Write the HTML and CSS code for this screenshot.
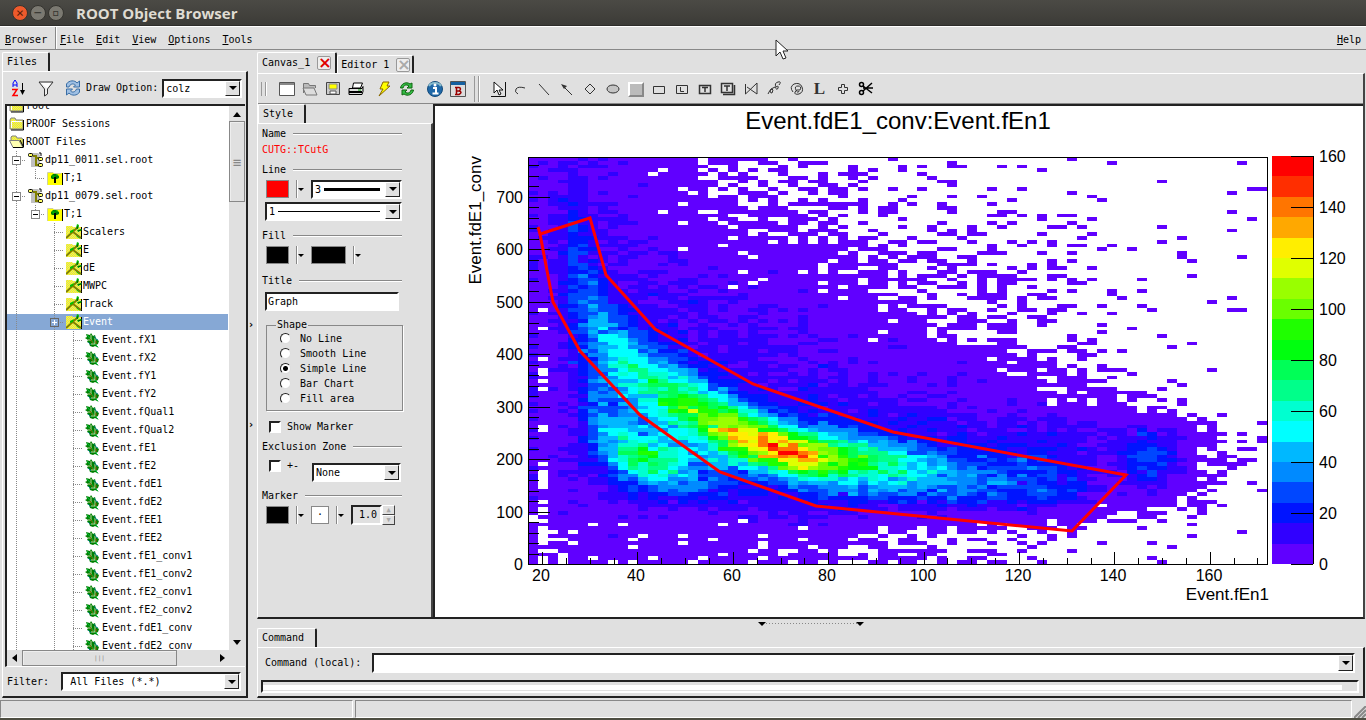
FILE: index.html
```html
<!DOCTYPE html>
<html lang="en">
<head>
  <meta charset="UTF-8">
  <title>ROOT Object Browser</title>
  <link rel="stylesheet" href="styles.css">
</head>
<body>
<svg class="defs" aria-hidden="true">
  <defs>
    <pattern id="dither" width="2" height="2" patternUnits="userSpaceOnUse">
      <rect width="2" height="2" fill="#ffff00"/><rect width="1" height="1" fill="#d8d890"/><rect x="1" y="1" width="1" height="1" fill="#d8d890"/>
    </pattern>
    <symbol id="icon-folder" viewBox="0 0 16 16">
      <path d="M1 4l1-2h4l1 2h7v9H1z" fill="url(#dither)" stroke="#808080"/>
      <path d="M2.500 12V5.500H13" fill="none" stroke="#fff"/>
      <path d="M14.500 4v10H2" fill="none" stroke="#000"/>
    </symbol>
    <symbol id="icon-folder-open" viewBox="0 0 16 16">
      <path d="M2 6V3l1-1h4l1 2h5l1 2v7H4z" fill="url(#dither)" stroke="#808080"/>
      <path d="M0.500 6.500H10l4 7H4z" fill="#ffffb0" stroke="#808080"/>
      <path d="M11 6l3.500 7V5M14.500 13.500H4" fill="none" stroke="#000"/>
    </symbol>
    <symbol id="icon-rootfile" viewBox="0 0 16 16">
      <path d="M3 1h7l2 2v12H3z" fill="#c0c0c0"/>
      <path d="M5 4h3v9h4M8 6h4" fill="none" stroke="#808000" stroke-width="2"/>
      <g fill="#ffff66" stroke="#000"><rect x="0.500" y="1.500" width="4" height="3" rx="1"/><rect x="10.500" y="5.500" width="4" height="3" rx="1"/><rect x="10.500" y="11.500" width="4" height="3" rx="1"/></g>
      <path d="M11 1h2v3" fill="none" stroke="#000"/>
    </symbol>
    <symbol id="icon-tree" viewBox="0 0 16 16">
      <path d="M1 2h5v1h9v12H1z" fill="#ffff00"/><path d="M0.500 15V2.500H6l1 1h7" fill="none" stroke="#d0d0a0"/>
      <path d="M15.500 3v12" stroke="#000"/>
      <path d="M4 8V6l2-2h3l3 2v2l-2 1H5z" fill="#008000"/><path d="M5 6h2v2M9 5h2" fill="none" stroke="#00c000"/>
      <path d="M8 7v6" stroke="#000" stroke-width="2"/>
    </symbol>
    <symbol id="icon-branch" viewBox="0 0 16 16">
      <path d="M0 2h6l1 1h9v12H0z" fill="url(#dither)"/><path d="M15.500 3v12" stroke="#000"/>
      <path d="M0 14L12 3M7 8l8 6" fill="none" stroke="#808000" stroke-width="2"/>
      <path d="M10 4l1-4 2 1-1 4zM11 6l4-1 1 1-4 2zM4 7l4-2-1 3-3 1zM10 11l5 4-4-2z" fill="#00c000"/>
      <path d="M11 5l1-3M12 7l3-1" stroke="#006000"/>
    </symbol>
    <symbol id="icon-leaf" viewBox="0 0 16 16">
      <path d="M1 2l4 1 1-2 2 3 2-1 1 4 3 2-1 3-2 1 3 3-4-2-2 1-3-1-1-3-2-1 1-2-3-2 2-1z" fill="#008000"/>
      <path d="M2 3l8 9 3 3" fill="none" stroke="#00c040"/>
      <path d="M6 3v5H3M10 6v6H6" fill="none" stroke="#c0d8a0" stroke-width="1"/>
      <path d="M9 4l2 3 2 1M3 10l3 3" fill="none" stroke="#008080"/>
      <path d="M5 7l3 4M11 9v3" stroke="#806000"/>
    </symbol>
  </defs>
</svg>

<header class="titlebar">
  <button class="win close" aria-label="Close">×</button>
  <button class="win" aria-label="Minimize">−</button>
  <button class="win" aria-label="Maximize">▫</button>
  <h1>ROOT Object Browser</h1>
</header>

<nav class="menubar">
  <button class="first"><u>B</u>rowser</button>
  <button><u>F</u>ile</button>
  <button><u>E</u>dit</button>
  <button><u>V</u>iew</button>
  <button><u>O</u>ptions</button>
  <button><u>T</u>ools</button>
  <button class="help"><u>H</u>elp</button>
</nav>

<main>
  <aside class="files">
    <div class="tabs"><button class="tab">Files</button></div>
    <div class="panel files-panel">
      <div class="file-tools">
        <button class="tool" aria-label="Sort"><svg width="16" height="18" viewBox="0 0 16 18"><path d="M2 8V4l2-3 2 3v4M2 6h4" fill="none" stroke="#00f"/><path d="M1 10.500h5L2 16.500h5" fill="none" stroke="#f00" stroke-width="1.500"/><path d="M11.500 4v8" stroke="#000"/><path d="M9 11h5l-2.500 5z"/></svg></button>
        <button class="tool" aria-label="Filter"><svg width="16" height="18" viewBox="0 0 16 18"><path d="M1 3h14L9.500 10v5l-3 2v-7z" fill="#eee" stroke="#333"/><path d="M3 4h10l-4 5z" fill="#fff"/></svg></button>
        <button class="tool" aria-label="Refresh"><svg width="16" height="18" viewBox="0 0 16 18"><path d="M1.500 8V5C4 1 10 1 12 4l2.500-2v6h-6l2-2C8 4 5 5 4 8zM14.500 10v3c-2 4-8 4-10.500 1l-2.500 2v-6h6l-2 2c2 2 5 1 6-2z" fill="#9fc0e4" stroke="#3a6ea5"/></svg></button>
        <label for="drawopt">Draw Option:</label>
        <div class="combo drawopt"><select id="drawopt"><option>colz</option></select><span class="arrow"></span></div>
      </div>
      <div class="tree-box">
        <ul class="tree" id="file-tree"></ul>
        <div class="vscroll"><i class="up"></i><div class="thumb">≡</div><i class="down"></i></div>
        <div class="hscroll"><i class="left"></i><div class="thumb">|||</div><i class="right"></i></div>
      </div>
      <div class="filter">
        <label for="filter">Filter:</label>
        <div class="combo"><select id="filter"><option>All Files (*.*)</option></select><span class="arrow"></span></div>
      </div>
    </div>
  </aside>

  <div class="vsplit"><span>›</span><span>›</span></div>

  <section class="work">
    <div class="tabs">
      <button class="tab canvas-tab">Canvas_1 <span class="x red">×</span></button>
      <button class="tab editor-tab">Editor 1 <span class="x">×</span></button>
    </div>
    <div class="panel canvas-panel">
      <div class="toolbar">
        <span class="grip"></span>
        <div class="group">
          <button class="tool" aria-label="New"><svg viewBox="0 0 16 16"><path d="M0.500 1.500h15v13H.500z" fill="#fff" stroke="#555"/><path d="M1 2h14v2H1z" fill="#888"/></svg></button>
          <button class="tool" aria-label="Open"><svg viewBox="0 0 16 16"><path d="M1.500 12V2.500h5l1 2h6V7" fill="#bbb" stroke="#777"/><path d="M1 7h11l3 7H4z" fill="#ddd" stroke="#777"/></svg></button>
          <button class="tool" aria-label="Save"><svg viewBox="0 0 16 16"><path d="M1.500 1.500h13v12h-13z" fill="#ccc" stroke="#444"/><path d="M4 3h8v5H4z" fill="#ff0" stroke="#888"/><path d="M5 10h6v3H5z" fill="#fff" stroke="#555"/></svg></button>
          <button class="tool" aria-label="Print"><svg viewBox="0 0 16 16"><path d="M4.500 7l1-5h9l-2 5z" fill="#fff" stroke="#000"/><path d="M1 7.500h13l1-2v5l-1 3H1z" fill="#ddd" stroke="#000"/><path d="M1 11h13" stroke="#000" stroke-width="2"/><path d="M10 9h3" stroke="#0a0"/></svg></button>
        </div>
        <div class="group">
          <button class="tool" aria-label="Interrupt"><svg viewBox="0 0 16 16"><path d="M7 1h6l-2 4h3L3 15l4-7H4z" fill="#ff0" stroke="#886600"/></svg></button>
          <button class="tool" aria-label="Refresh canvas"><svg viewBox="0 0 16 16"><path d="M1.500 7C2 3 7 0 11 3l2-1v5H8l2-2C7 3 5 4 4 7z" fill="#3b4" stroke="#161"/><path d="M14.500 9c-.5 4-5.500 7-9.500 4l-2 1V9h5l-2 2c3 2 5 1 6-2z" fill="#3b4" stroke="#161"/></svg></button>
        </div>
        <div class="group">
          <button class="tool" aria-label="Inspect"><svg viewBox="0 0 16 16"><circle cx="8" cy="8" r="7.500" fill="#1f68a8" stroke="#134a7a"/><path d="M2 5c2-4 10-4 12 0" stroke="#8bc" fill="none" stroke-width="2"/><path d="M6 7h3v5M5.500 12.500h6" fill="none" stroke="#fff" stroke-width="2"/><circle cx="8" cy="4" r="1.500" fill="#fff"/></svg></button>
          <button class="tool" aria-label="Browser"><svg viewBox="0 0 16 16"><path d="M.500.500h15v15H.500z" fill="#ddd" stroke="#555"/><path d="M1 1h14v3H1z" fill="#1560a0"/><path d="M5 6.500h4q3 1 0 3.500 4 1 0 3.500H5M6.500 6v7M6 10h4" fill="none" stroke="#900" stroke-width="1.500"/></svg></button>
        </div>
        <span class="sep"></span>
        <div class="group draw">
          <button class="tool" aria-label="Modify"><svg viewBox="0 0 16 16"><path d="M1 15.500h14.500V1" fill="none" stroke="#111"/><path d="M4 1v11l3-3 2 5 2-1-2-4h4z" fill="#fff" stroke="#111"/></svg></button>
          <button class="tool" aria-label="Arc"><svg viewBox="0 0 16 16"><path d="M5 13Q1 11 3 8t9-1" fill="none" stroke="#333"/></svg></button>
          <button class="tool" aria-label="Line"><svg viewBox="0 0 16 16"><path d="M3 3l10 11" stroke="#333"/></svg></button>
          <button class="tool" aria-label="Arrow"><svg viewBox="0 0 16 16"><path d="M3 4l10 10" stroke="#333"/><path d="M2 3l6 2-3 3z" fill="#333"/></svg></button>
          <button class="tool" aria-label="Diamond"><svg viewBox="0 0 16 16"><path d="M8 3l5 5-5 5-5-5z" fill="none" stroke="#333"/></svg></button>
          <button class="tool" aria-label="Ellipse"><svg viewBox="0 0 16 16"><ellipse cx="8" cy="8" rx="6" ry="4" fill="#c4c4c4" stroke="#333"/></svg></button>
          <button class="tool" aria-label="Pad"><svg viewBox="0 0 16 16"><path d="M0 1h16v15H0z" fill="#888"/><path d="M0 16V1h16l-2 2H2v11z" fill="#fff"/><path d="M2 3h12v11H2z" fill="#bbb"/></svg></button>
          <button class="tool" aria-label="Pave"><svg viewBox="0 0 16 16"><path d="M2.500 5.500h11v7h-11z" fill="none" stroke="#333"/></svg></button>
          <button class="tool" aria-label="Pave label"><svg viewBox="0 0 16 16"><path d="M2.500 4.500h11v8h-11z" fill="none" stroke="#333"/><path d="M6.500 6v4.500H10" fill="none" stroke="#333"/></svg></button>
          <button class="tool" aria-label="Pave text"><svg viewBox="0 0 16 16"><path d="M2.500 4.500h11v8h-11zM5 6.500h6M8 7v4" fill="none" stroke="#333" stroke-width="1.500"/></svg></button>
          <button class="tool" aria-label="Paves text"><svg viewBox="0 0 16 16"><path d="M1.500 2.500h11v9h-11zM14.500 4v9.500H3M4 5h6M7 5v5" fill="none" stroke="#333" stroke-width="1.500"/></svg></button>
          <button class="tool" aria-label="Polyline"><svg viewBox="0 0 16 16"><path d="M2.500 3v10L14 2v11L4 6" fill="none" stroke="#333"/></svg></button>
          <button class="tool" aria-label="Curly line"><svg viewBox="0 0 16 16"><path d="M2 13q2-5 4-5t0 4q-3 0-1-4l4-2q2 4 3 1t-2-1q-2-4 2-5t1 3" fill="none" stroke="#333"/></svg></button>
          <button class="tool" aria-label="Curly arc"><svg viewBox="0 0 16 16"><path d="M4 11q-4-5 1-8 6-2 8 3t-3 7q-5 1-4-2t5-2q2-4-2-4t-2 4 3 1" fill="none" stroke="#333"/></svg></button>
          <button class="tool letter" aria-label="Latex">L</button>
          <button class="tool" aria-label="Marker"><svg viewBox="0 0 16 16"><path d="M6.500 3.500h3v3h3v3h-3v3h-3v-3h-3v-3h3z" fill="none" stroke="#333"/></svg></button>
          <button class="tool" aria-label="Graphical cut"><svg viewBox="0 0 16 16"><g fill="none" stroke="#000" stroke-width="1.500"><circle cx="3.500" cy="3.500" r="2"/><circle cx="3.500" cy="11.500" r="2"/><path d="M5 5l9 7M5 10l9-8M5 7h10"/></g></svg></button>
        </div>
      </div>
      <div class="editor-row">
        <form class="style">
          <div class="tabs"><button class="tab" type="button">Style</button></div>
          <div class="style-body">
            <h3>Name</h3>
            <p class="objname">CUTG::TCutG</p>
            <h3>Line</h3>
            <div class="row">
              <button type="button" class="swatch red" aria-label="Line color"></button><i class="drop"></i>
              <div class="combo width"><select aria-label="Line width"><option>3</option></select><span class="stroke thick"></span><span class="arrow"></span></div>
            </div>
            <div class="combo dash"><select aria-label="Line style"><option>1</option></select><span class="stroke"></span><span class="arrow"></span></div>
            <h3>Fill</h3>
            <div class="row">
              <button type="button" class="swatch" aria-label="Fill color"></button><i class="drop"></i>
              <button type="button" class="swatch wide" aria-label="Fill pattern"></button><i class="drop"></i>
            </div>
            <h3><label for="title">Title</label></h3>
            <input class="text" id="title" type="text" value="Graph">
            <fieldset>
              <legend>Shape</legend>
              <label><input type="radio" name="shape">No Line</label>
              <label><input type="radio" name="shape">Smooth Line</label>
              <label><input type="radio" name="shape" checked>Simple Line</label>
              <label><input type="radio" name="shape">Bar Chart</label>
              <label><input type="radio" name="shape">Fill area</label>
            </fieldset>
            <label class="check"><input type="checkbox">Show Marker</label>
            <h3>Exclusion Zone</h3>
            <div class="row zone">
              <label class="check"><input type="checkbox">+-</label>
              <div class="combo none"><select aria-label="Exclusion side"><option>None</option></select><span class="arrow"></span></div>
            </div>
            <h3>Marker</h3>
            <div class="row">
              <button type="button" class="swatch" aria-label="Marker color"></button><i class="drop"></i>
              <button type="button" class="swatch dot" aria-label="Marker style">·</button><i class="drop"></i>
              <div class="spin"><input type="text" value="1.0" aria-label="Marker size"><span class="spin-btns"><button type="button" aria-label="More">▲</button><button type="button" aria-label="Less">▼</button></span></div>
            </div>
          </div>
        </form>
        <div class="canvas"><svg id="plot" viewBox="0 0 926 511" role="img" aria-label="Event.fdE1_conv:Event.fEn1"></svg></div>
      </div>
    </div>

    <div class="hsplit"><i></i></div>

    <div class="tabs"><button class="tab">Command</button></div>
    <div class="panel command">
      <div class="cmd-row">
        <label for="cmd">Command (local):</label>
        <div class="combo"><input id="cmd" type="text"><span class="arrow"></span></div>
      </div>
      <div class="output"><div></div></div>
    </div>
  </section>
</main>

<footer class="statusbar"><span></span><span></span><svg width="12" height="12" viewBox="0 0 12 12"><path d="M0 12L12 0M4 12l8-8M8 12l4-4" stroke="#888" stroke-width="2"/></svg></footer>
<div class="desktop"></div>

<svg class="pointer" width="14" height="22" viewBox="0 0 14 22"><path d="M1 1v16l4-4 3 7 3-1-3-7h5z" fill="#fff" stroke="#222"/></svg>

<script>
  // guides: "-" open node, "+" closed node, "T" child, "L" last child, "|" pass-through
  const rows = [
    ["", "folder", "root"],
    ["", "folder", "PROOF Sessions"],
    ["", "folder-open", "ROOT Files"],
    ["-", "rootfile", "dp11_0011.sel.root"],
    ["|L", "tree", "T;1"],
    ["-", "rootfile", "dp11_0079.sel.root"],
    ["|-", "tree", "T;1"],
    ["| T", "branch", "Scalers"],
    ["| T", "branch", "E"],
    ["| T", "branch", "dE"],
    ["| T", "branch", "MWPC"],
    ["| T", "branch", "Track"],
    ["| +", "branch", "Event"]
  ];
  const leaves = ["fX1", "fX2", "fY1", "fY2", "fQual1", "fQual2", "fE1", "fE2", "fdE1", "fdE2", "fEE1", "fEE2",
    "fE1_conv1", "fE1_conv2", "fE2_conv1", "fE2_conv2", "fdE1_conv", "fdE2_conv"];
  leaves.forEach(l => rows.push(["| |T", "leaf", "Event." + l]));

  const guideClass = { "-": "tee", "+": "tee", "T": "tee", "L": "end", "|": "pass", " ": "" };
  document.getElementById("file-tree").innerHTML = rows.map(([guides, icon, label]) => {
    const cells = [...guides].map((g, depth) => {
      const box = g === "-" || g === "+" ? `<button class="node${g === "+" ? " plus" : ""}" aria-label="Toggle ${label}"></button>` : "";
      const cls = g === "-" && depth === 1 ? "end" : guideClass[g];
      return `<span class="guide ${cls}">${box}</span>`;
    }).join("");
    return `<li${label === "Event" ? ' class="selected"' : ""}>${cells}<svg class="icon"><use href="#icon-${icon}"/></svg><span>${label}</span></li>`;
  }).join("");

  // ---- 2D histogram ----
  const palette = ["#6000ff", "#3000ff", "#0014ff", "#0047ff", "#008aff", "#00b8ff", "#00ffff", "#00ffd0", "#00ff8a", "#00ff57",
    "#00ff0f", "#1fff00", "#6aff00", "#99ff00", "#e0ff00", "#ffee00", "#ffa800", "#ff7500", "#ff2e00", "#ff0000"];
  const left = 92, top_ = 51, width = 739, height = 407, nx = 74, ny = 108;
  const right = left + width, bottom = top_ + height;

  const gx = [0, 1, 2, 4, 6, 9, 13, 17, 21, 25, 29, 33, 37, 41, 45, 49, 53, 57, 61, 65, 69, 73];
  const gy = [54, 94, 144, 194, 234, 274, 304, 334, 354, 384, 404, 424, 454];
  const base = [
    [6, 5, 6, 9, 6, 5, 2.5, 1, .7, .6, .6, .25, .15, .12, .12, .1, .1, .03, .03, .02, .01, 0],
    [6, 5, 9, 12, 7, 6, 3, 1.2, .8, .7, .6, .35, .3, .2, .15, .12, .1, .05, .03, .02, .02, .02],
    [6, 5, 10, 16, 11, 7, 5, 4, 2, 1.5, 1.2, .9, .6, .5, .4, .3, .2, .1, .04, .03, .02, .03],
    [6, 2.5, 6, 17, 16, 9, 8, 8, 6, 4.5, 3, 1.6, 1.1, .6, .5, .4, .3, .15, .07, .04, .03, .03],
    [6, .8, 5, 14, 18, 16, 12, 9, 8, 7, 6, 4.5, 3, 1.3, .8, .7, .4, .2, .1, .05, .04, .04],
    [6, .5, 5, 10, 20, 20, 18, 13, 10, 9, 9, 7, 6, 5, 3, 1.8, 1.1, .5, .08, .05, .03, .02],
    [6, 1.5, 5, 8, 18, 22, 20, 16, 15, 15, 13, 12, 10, 8, 6, 6, 4, 2.5, .7, .2, .08, .06],
    [6, 2, 5, 8, 14, 18, 20, 20, 20, 18, 16, 16, 15, 14, 14, 12, 12, 10, 8, 4, .4, .15],
    [6, 1.5, 5, 8, 12, 18, 25, 25, 22, 20, 20, 20, 18, 18, 18, 18, 15, 8, 8, 4, .8, .2],
    [5, 1.5, 5, 6, 7, 9, 14, 16, 14, 15, 18, 18, 17, 17, 17, 17, 15, 5, 3, 2, .3, .05],
    [2, .7, 3, 4, 4, 5, 5, 6, 7, 9, 9, 8, 7, 5, 4, 3, 2.5, 1.8, .6, .2, .1, .02],
    [2, .4, 1, 2, 3, 3, 3, 3, 3, 2.5, 2.2, 1.4, 1, .6, .5, .4, .25, .15, .08, .05, .03, .02],
    [1.6, .3, 1.3, 1.5, 1.8, 1.8, 1.6, 1.5, 1.5, 1.4, 1.2, .8, .7, .5, .3, .15, .08, .05, .08, .05, .02, 0]
  ];
  // crest of each band: x, y, extra counts, spread
  const mainBand = [[130, 140, 3, 40], [147, 190, 14, 40], [160, 220, 24, 34], [180, 250, 34, 28], [214, 279, 48, 24], [254, 302, 72, 22],
    [284, 319, 92, 20], [314, 332, 110, 18], [344, 343, 124, 16], [364, 349, 118, 16], [404, 352, 78, 17], [434, 357, 58, 17],
    [474, 364, 38, 17], [514, 372, 22, 16], [564, 376, 14, 16], [644, 380, 9, 16], [652, 380, 0, 16]];
  const lowBand = [[140, 310, 0, 28], [156, 318, 12, 26], [168, 328, 26, 22], [184, 342, 46, 20], [204, 350, 58, 18], [220, 357, 54, 17],
    [240, 362, 36, 16], [265, 372, 12, 16], [300, 380, 0, 16]];

  let seed = 20110079;
  function rnd() {
    seed = (seed * 1664525 + 1013904223) >>> 0;
    return (seed + 0.5) / 4294967296;
  }
  function poisson(mean) {
    if (mean > 30) {
      const g = Math.sqrt(-2 * Math.log(rnd())) * Math.cos(2 * Math.PI * rnd());
      return Math.round(mean + Math.sqrt(mean) * g);
    }
    const limit = Math.exp(-mean);
    let n = 0, p = rnd();
    while (p > limit) { n++; p *= rnd(); }
    return n;
  }
  function bracket(list, v) {
    let i = 0;
    while (i < list.length - 2 && v > list[i + 1]) i++;
    const f = (v - list[i]) / (list[i + 1] - list[i]);
    return [i, Math.min(1, Math.max(0, f))];
  }
  function band(points, x, y) {
    if (x < points[0][0] || x > points[points.length - 1][0]) return 0;
    const [i, f] = bracket(points.map(p => p[0]), x);
    const [, cy, amp, s] = points[i].map((v, k) => v + (points[i + 1][k] - v) * f);
    return amp * Math.exp(-((y - cy) ** 2) / (2 * s * s));
  }
  function mean(ix, x, y) {
    const [i, fx] = bracket(gx, ix), [j, fy] = bracket(gy, y);
    const a = base[j][i] * (1 - fx) + base[j][i + 1] * fx;
    const b = base[j + 1][i] * (1 - fx) + base[j + 1][i + 1] * fx;
    const blob = 22 * Math.exp(-((x - 714) ** 2) / 500 - ((y - 354) ** 2) / 600);
    return a * (1 - fy) + b * fy + band(mainBand, x, y) + band(lowBand, x, y) + blob;
  }

  let out = '<g shape-rendering="crispEdges">';
  const edgeX = i => left + Math.round(i * width / nx);
  const edgeY = j => top_ + Math.round(j * height / ny);
  for (let j = 0; j < ny; j++) {
    let start = 0, last = -1;
    for (let i = 0; i <= nx; i++) {
      let c = -1;
      if (i < nx) {
        const n = poisson(mean(i, (edgeX(i) + edgeX(i + 1)) / 2, (edgeY(j) + edgeY(j + 1)) / 2));
        c = n > 0 ? Math.min(19, Math.floor(n / 8)) : -1;
      }
      if (c !== last || i === nx) {
        if (last >= 0) out += `<rect x="${edgeX(start)}" y="${edgeY(j)}" width="${edgeX(i) - edgeX(start)}" height="${edgeY(j + 1) - edgeY(j)}" fill="${palette[last]}"/>`;
        start = i;
        last = c;
      }
    }
  }
  palette.forEach((c, i) => {
    const y1 = bottom - Math.round((i + 1) * 20.4), y2 = bottom - Math.round(i * 20.4);
    out += `<rect x="836" y="${y1}" width="41" height="${y2 - y1}" fill="${c}"/>`;
  });

  // frame and ticks
  let ticks = `M${left} ${top_}H${right}V${bottom}H${left}ZM877 50V${bottom}`;
  for (let v = 0; v <= 760; v += 20) ticks += `M${left} ${Math.round(bottom - v * .525)}h${v % 100 ? 11 : 22}`;
  for (let v = 20; v <= 170; v += 5) ticks += `M${Math.round(106 + (v - 20) * 4.77)} ${bottom}v${v % 20 ? -6 : -12}`;
  for (let v = 0; v <= 160; v += 20) ticks += `M877 ${bottom - v * 2.55}h-22`;
  out += `<path d="${ticks}" class="axis"/></g>`;

  for (let v = 0; v <= 700; v += 100) out += `<text x="87" y="${Math.round(bottom + 6 - v * .525)}" text-anchor="end">${v}</text>`;
  for (let v = 20; v <= 160; v += 20) out += `<text x="${Math.round(105 + (v - 20) * 4.77)}" y="475" text-anchor="middle">${v}</text>`;
  for (let v = 0; v <= 160; v += 20) out += `<text x="883" y="${bottom + 6 - v * 2.55}">${v}</text>`;
  out += '<text class="axis-title" x="833" y="494" text-anchor="end">Event.fEn1</text>';
  out += '<text class="axis-title" transform="translate(45 50) rotate(-90)" text-anchor="end">Event.fdE1_conv</text>';
  out += '<text class="plot-title" x="462" y="23" text-anchor="middle">Event.fdE1_conv:Event.fEn1</text>';
  out += '<polyline class="cut" points="102,121 104,128 154,112 170,169 219,223 317,278 457,326 690,369 636,425 380,400 284,366 204,309 144,245 117,196 104,128"/>';
  document.getElementById("plot").innerHTML = out;
</script>
</body>
</html>
```

FILE: styles.css
```css
* {
  box-sizing: border-box;
}
body {
  margin: 0;
  height: 100vh;
  display: flex;
  flex-direction: column;
  overflow: hidden;
  background: #e0e0e0;
  color: #000;
  font: 10px/16px "DejaVu Sans Mono", monospace;
}
button, input, select {
  font: inherit;
  color: inherit;
  margin: 0;
  padding: 0;
  border: 0;
  border-radius: 0;
  background: none;
  appearance: none;
}
button {
  white-space: nowrap;
}
.defs {
  position: absolute;
  width: 0;
  height: 0;
}

/* window frame */
.titlebar {
  flex: none;
  height: 26px;
  display: flex;
  align-items: center;
  gap: 2px;
  padding-left: 12px;
  background: linear-gradient(#4b4a45, #3c3b37);
  border-bottom: 1px solid #2e2d2a;
}
.titlebar h1 {
  margin: 0 0 0 10px;
  font: bold 15px/24px "Open Sans", sans-serif;
  color: #dfdbd2;
}
.win {
  width: 16px;
  height: 16px;
  border-radius: 8px;
  background: #7b7971;
  border: 1px solid #35342f;
  font-size: 13px;
  line-height: 13px;
  color: #35342f;
}
.win.close {
  background: #ee5a2c;
  color: #5a1c08;
}
.menubar {
  flex: none;
  height: 24px;
  display: flex;
  align-items: center;
  gap: 12px;
  border-top: 1px solid #fff;
  border-bottom: 1px solid #888;
  padding: 0 5px;
}
.menubar button {
  padding-top: 3px;
}
.menubar .first {
  align-self: stretch;
  width: 51px;
  margin-right: -8px;
  text-align: left;
  border-right: 1px solid #888;
  box-shadow: 1px 0 #fff;
}
.menubar .help {
  margin-left: auto;
}

main {
  flex: 1;
  min-height: 0;
  display: flex;
  padding-top: 2px;
}
.tabs {
  flex: none;
  display: flex;
  height: 19px;
}
.tab {
  display: flex;
  align-items: center;
  gap: 7px;
  padding: 0 11px 0 4px;
  border-top: 1px solid #fff;
  border-left: 1px solid #fff;
  border-right: 2px solid #222;
  border-radius: 2px 2px 0 0;
}
.panel {
  display: flex;
  flex-direction: column;
  border: 1px solid #fff;
  border-right: 2px solid #222;
  border-bottom: 2px solid #222;
}

/* files */
.files {
  width: 246px;
  margin-left: 2px;
  display: flex;
  flex-direction: column;
}
.files-panel {
  flex: 1;
  min-height: 0;
}
.file-tools {
  flex: none;
  height: 32px;
  display: flex;
  align-items: center;
  padding: 0 4px 0 2px;
}
.file-tools .tool {
  width: 27px;
}
.file-tools svg {
  width: 16px;
  height: 18px;
}
.drawopt {
  flex: 1;
  margin-left: 4px;
}
.combo {
  display: flex;
  height: 19px;
  background: #fff;
  border: 2px solid;
  border-color: #222 #fff #fff #222;
}
.combo select, .combo input {
  flex: 1;
  min-width: 0;
  padding-left: 2px;
  outline: 0;
}
.arrow {
  flex: none;
  width: 15px;
  display: flex;
  align-items: center;
  justify-content: center;
  background: #e0e0e0;
  border: 1px solid;
  border-color: #fff #222 #222 #fff;
}
.arrow::after, .drop::after {
  content: "";
  border: 4px solid transparent;
  border-top-color: #000;
  border-bottom: 0;
}
.tree-box {
  flex: 1;
  min-height: 0;
  display: grid;
  grid-template: minmax(0, 1fr) 16px / minmax(0, 1fr) 16px;
  margin: 0 1px 0 2px;
  background: #e0e0e0;
  border-top: 2px solid #222;
  border-left: 2px solid #222;
  border-bottom: 1px solid #fff;
}
.tree {
  margin: 0;
  padding: 0;
  list-style: none;
  overflow: hidden;
  background: #fff;
}
.tree li {
  display: flex;
  align-items: center;
  height: 18px;
  margin-right: 1px;
  white-space: nowrap;
}
.tree li:first-child {
  margin-top: -9px;
}
.tree li.selected {
  background: linear-gradient(#86a8d5, #86a8d5) center / 100% 16px no-repeat;
  color: #fff;
}
.tree .icon {
  flex: none;
  width: 16px;
  height: 16px;
  margin: 0 1px 0 2px;
}
.guide {
  flex: none;
  width: 19px;
  height: 18px;
  display: flex;
  align-items: center;
  justify-content: center;
  background-repeat: no-repeat;
}
.guide.pass {
  background-image: repeating-linear-gradient(#888 0 1px, transparent 1px 2px);
  background-size: 1px 18px;
  background-position: 9px 0;
}
.guide.tee, .guide.end {
  background-image: repeating-linear-gradient(#888 0 1px, transparent 1px 2px), repeating-linear-gradient(90deg, #888 0 1px, transparent 1px 2px);
  background-size: 1px 18px, 10px 1px;
  background-position: 9px 0, 9px 9px;
}
.guide.end {
  background-size: 1px 10px, 10px 1px;
}
.node {
  width: 9px;
  height: 9px;
  border: 1px solid #888;
  background: linear-gradient(#000, #000) center / 5px 1px no-repeat #fff;
}
.node.plus {
  border-color: #666;
  background: linear-gradient(#fff, #fff) center / 5px 1px no-repeat, linear-gradient(#fff, #fff) center / 1px 5px no-repeat #86a8d5;
}
.vscroll {
  display: flex;
  flex-direction: column;
  align-items: center;
}
.hscroll {
  display: flex;
  align-items: center;
  margin-right: 4px;
}
.thumb {
  display: flex;
  align-items: center;
  justify-content: center;
  border: 1px solid #888;
  box-shadow: inset 1px 1px #eee;
  color: #888;
}
.vscroll .thumb {
  width: 16px;
  height: 81px;
  margin: 4px 0 auto;
  font-size: 14px;
}
.hscroll .thumb {
  width: 155px;
  height: 16px;
  margin: 0 auto 0 5px;
  font-size: 6px;
}
.vscroll i, .hscroll i {
  border: 4px solid transparent;
}
.vscroll .up {
  margin-top: 6px;
  border-top: 0;
  border-bottom: 5px solid #000;
}
.vscroll .down {
  margin-bottom: 5px;
  border-bottom: 0;
  border-top: 5px solid #000;
}
.hscroll .left {
  margin-left: 5px;
  border-left: 0;
  border-right: 5px solid #000;
}
.hscroll .right {
  border-right: 0;
  border-left: 5px solid #000;
}
.filter {
  flex: none;
  display: flex;
  align-items: center;
  gap: 12px;
  height: 29px;
  padding: 0 5px 0 4px;
}
.filter .combo {
  flex: 1;
}
.filter select {
  padding-left: 7px;
}

.vsplit {
  width: 9px;
  display: flex;
  flex-direction: column;
  justify-content: center;
  gap: 84px;
  font-weight: bold;
}

/* canvas area */
.work {
  flex: 1;
  min-width: 0;
  display: flex;
  flex-direction: column;
  padding-right: 1px;
}
.canvas-tab {
  height: 21px;
  padding-right: 4px;
}
.editor-tab {
  height: 18px;
  margin-top: 3px;
  padding: 0 2px 0 3px;
}
.x {
  width: 14px;
  height: 14px;
  border: 1px solid #999;
  border-radius: 2px;
  background: #eee;
  color: #aaa;
  font: bold 16px/12px "DejaVu Sans", sans-serif;
}
.x.red {
  color: #e00000;
}
.canvas-panel {
  flex: 1;
  min-height: 0;
  margin-top: 2px;
  border-right-color: #444;
}
.toolbar {
  flex: none;
  height: 30px;
  display: flex;
  align-items: center;
  border-bottom: 1px solid #888;
}
.grip, .sep {
  width: 5px;
  height: 20px;
  border: solid #999;
  border-width: 0 1px;
  box-shadow: 1px 0 #fff;
}
.grip {
  margin: 0 9px 0 3px;
  height: 14px;
}
.sep {
  height: 26px;
  margin: 0 7px 0 0;
}
.group {
  display: flex;
  margin-right: 5px;
}
.tool {
  width: 23px;
  height: 20px;
  display: flex;
  align-items: center;
  justify-content: center;
}
.toolbar svg {
  width: 16px;
  height: 16px;
}
.letter {
  font: bold 17px/20px "Liberation Serif", serif;
  color: #333;
}
.editor-row {
  flex: 1;
  min-height: 0;
  display: flex;
}
.style {
  flex: none;
  width: 175px;
  display: flex;
  flex-direction: column;
}
.style-body {
  flex: 1;
  border-top: 1px solid #fff;
  border-right: 2px solid #444;
  padding: 2px 29px 0 4px;
}
.style h3 {
  display: flex;
  align-items: center;
  gap: 7px;
  margin: 4px 0 1px;
  font: inherit;
  white-space: nowrap;
}
.style h3:first-child {
  margin: 0;
}
.style h3::after {
  content: "";
  flex: 1;
  height: 2px;
  background: linear-gradient(#888 1px, #fff 1px);
}
.objname {
  margin: 0 0 4px;
  color: #f00;
}
.row {
  display: flex;
  align-items: center;
  height: 20px;
  padding-left: 4px;
}
.style .row + h3 {
  margin-top: 8px;
}
.swatch {
  width: 23px;
  height: 18px;
  background: #000;
  border: 1px solid #888;
}
.swatch.red {
  background: #f00;
}
.swatch.wide {
  width: 35px;
}
.swatch.dot {
  width: 18px;
  background: #fff;
}
.drop {
  width: 8px;
  height: 18px;
  display: flex;
  align-items: center;
  justify-content: flex-end;
  margin: 0 7px;
  border-left: 1px solid #888;
  box-shadow: inset 1px 0 #fff;
}
.drop::after {
  border-width: 3px 3px 0;
}
.combo.width {
  flex: 1;
}
.combo.dash {
  margin: 3px 0 0 3px;
}
.combo.width select, .combo.dash select {
  flex: none;
  width: 11px;
}
.stroke {
  flex: 1;
  height: 1px;
  margin: auto 5px auto 0;
  background: #000;
}
.stroke.thick {
  height: 3px;
}
.style .combo + h3 {
  margin-top: 7px;
}
.text {
  display: block;
  width: 134px;
  height: 19px;
  margin: 3px 0 0 3px;
  padding-left: 1px;
  background: #fff;
  border: 2px solid;
  border-color: #222 #fff #fff #222;
}
fieldset {
  margin: 6px 0 8px 4px;
  padding: 0 0 4px 13px;
  width: 137px;
  border: 1px solid #888;
  box-shadow: 1px 1px #fff;
}
legend {
  margin-left: -4px;
  padding: 0 1px;
}
fieldset label {
  display: flex;
  align-items: center;
  height: 15px;
}
fieldset legend + label {
  margin-top: -2px;
}
input[type="radio"] {
  width: 11px;
  height: 11px;
  margin-right: 9px;
  border: 1px solid #222;
  border-right-color: #ddd;
  border-bottom-color: #ddd;
  border-radius: 6px;
  background: #fff;
}
input[type="radio"]:checked {
  background: radial-gradient(circle, #000 2px, #fff 3px);
}
.check {
  display: flex;
  align-items: center;
  padding-left: 7px;
}
input[type="checkbox"] {
  width: 12px;
  height: 12px;
  margin-right: 6px;
  border: 2px solid;
  border-color: #222 #fff #fff #222;
  background: #fff;
}
.row.zone {
  height: 26px;
  align-items: flex-end;
  padding-left: 0;
}
.zone .check {
  align-self: flex-start;
  padding-top: 2px;
}
.combo.none {
  flex: none;
  width: 89px;
  margin-left: 13px;
}
.style .zone + h3 {
  margin-top: 6px;
}
.spin {
  display: flex;
  height: 20px;
}
.spin input {
  width: 31px;
  border: 2px solid;
  border-color: #222 #fff #fff #222;
  padding-left: 6px;
}
.spin-btns {
  display: flex;
  flex-direction: column;
}
.spin button {
  width: 13px;
  height: 10px;
  border: 1px solid;
  border-color: #fff #444 #444 #fff;
  font-size: 7px;
  line-height: 8px;
  color: #aaa;
}
.canvas {
  flex: 1;
  min-width: 0;
  background: #fff;
  border-top: 2px solid #222;
  border-left: 2px solid #222;
}
#plot {
  display: block;
  width: 100%;
  height: 100%;
  font: 16px "Liberation Sans", sans-serif;
}
.axis {
  fill: none;
  stroke: #000;
}
#plot .axis-title {
  font-size: 17px;
}
#plot .plot-title {
  font-size: 24px;
}
.cut {
  fill: none;
  stroke: #f00;
  stroke-width: 3px;
}

/* command line */
.hsplit {
  flex: none;
  height: 9px;
  display: flex;
  align-items: center;
  justify-content: center;
}
.hsplit i {
  width: 106px;
  display: flex;
  justify-content: space-between;
  background: repeating-linear-gradient(90deg, #888 0 1px, transparent 1px 3px) center / 96px 1px no-repeat;
}
.hsplit i::before, .hsplit i::after {
  content: "";
  border: 4px solid transparent;
  border-top-color: #000;
  border-bottom: 0;
}
.command {
  flex: none;
  height: 51px;
  padding: 5px 8px 0 3px;
}
.cmd-row {
  display: flex;
  align-items: center;
  gap: 11px;
  padding-left: 4px;
}
.cmd-row .combo {
  flex: 1;
  height: 20px;
}
.output {
  height: 13px;
  margin-top: 7px;
  margin-right: -4px;
  border: 2px solid;
  border-color: #222 #fff #fff #222;
  padding: 3px 15px 0 0;
}
.output div {
  height: 5px;
  background: #fff;
}

.statusbar {
  flex: none;
  height: 20px;
  padding-top: 1px;
  display: flex;
  align-items: flex-end;
  gap: 2px;
}
.statusbar span {
  height: 18px;
  width: 353px;
  border: 1px solid;
  border-color: #888 #fff #fff #888;
}
.statusbar span + span {
  flex: 1;
}
.desktop {
  flex: none;
  height: 2px;
  background: #4e4e42;
}
.pointer {
  position: absolute;
  left: 775px;
  top: 39px;
}
```
